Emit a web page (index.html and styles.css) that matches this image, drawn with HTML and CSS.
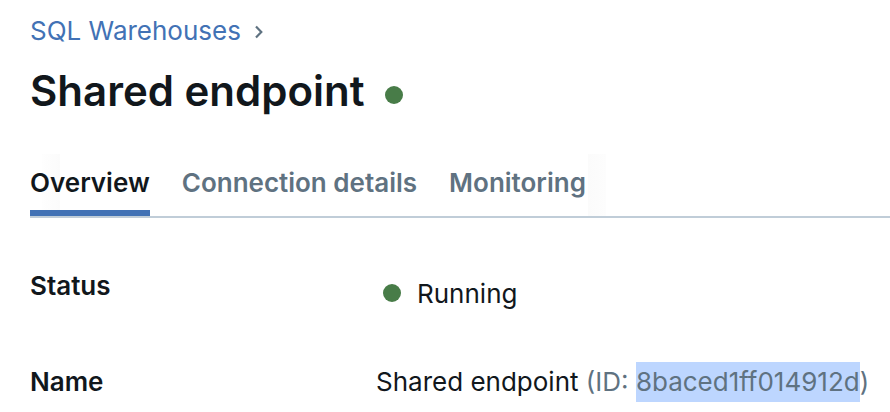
FILE: index.html
```html
<!DOCTYPE html>
<html lang="en">
<head>
<meta charset="utf-8">
<title>Shared endpoint</title>
<link rel="stylesheet" href="styles.css">
</head>
<body>
<main class="page">
  <nav class="breadcrumb" aria-label="Breadcrumb">
    <a href="#">SQL Warehouses</a>
    <svg class="chevron" viewBox="0 0 10 14" aria-hidden="true"><path d="M2 1.5l5.3 5.5-5.3 5.5"/></svg>
  </nav>
  <header class="heading">
    <h1>Shared endpoint</h1>
    <span class="dot"></span>
  </header>
  <div class="tabs" role="tablist">
    <button class="tab active" type="button" role="tab" aria-selected="true">Overview</button>
    <button class="tab" type="button" role="tab" aria-selected="false">Connection details</button>
    <button class="tab" type="button" role="tab" aria-selected="false">Monitoring</button>
    <span class="fade"></span>
  </div>
  <dl class="details">
    <dt>Status</dt>
    <dd class="status"><span class="dot"></span>Running</dd>
    <dt>Name</dt>
    <dd>Shared endpoint <span class="muted">(ID: <mark>8baced1ff014912d</mark>)</span></dd>
  </dl>
</main>
</body>
</html>
```
FILE: styles.css
```css
* {
  box-sizing: border-box;
}

body {
  margin: 0;
  background: #fff;
  color: #11171c;
  font: 26px/40px Inter, "Liberation Sans", sans-serif;
}

.page {
  padding: 11px 0 0 30px;
}

.breadcrumb {
  display: flex;
  align-items: center;
  gap: 13px;
}

.breadcrumb a {
  color: #4272b5;
  text-decoration: none;
}

.chevron {
  width: 10px;
  height: 14px;
  margin-top: 2px;
  fill: none;
  stroke: #5f7281;
  stroke-width: 2.2;
}

.heading {
  display: flex;
  align-items: center;
  gap: 20px;
  margin-top: 12px;
}

h1 {
  margin: 0;
  font-size: 42px;
  font-weight: 600;
  line-height: 56px;
}

.dot {
  flex: none;
  width: 18px;
  height: 18px;
  border-radius: 50%;
  background: #487c48;
}

.heading .dot {
  margin-top: 8px;
}

.tabs {
  display: flex;
  gap: 32px;
  margin-top: 35px;
  border-bottom: 2px solid #c0cdd8;
}

.tab {
  padding: 9px 0 7px;
  border: 0;
  border-bottom: 6px solid transparent;
  background: none;
  color: #5f7281;
  font: inherit;
  font-weight: 600;
}

.tab.active {
  border-color: #4272b5;
  background: linear-gradient(90deg, #fefefe, #fbfbfb) 12px 0 / 18px 100% no-repeat;
  color: #11171c;
}

.fade {
  width: 18px;
  margin-left: -30px;
  background: linear-gradient(90deg, #fbfbfb, #fdfdfd);
}

.details {
  display: grid;
  grid-template-columns: 346px 1fr;
  row-gap: 48px;
  margin: 48px 0 0;
}

dt {
  font-weight: 600;
}

dd {
  margin: 0;
  white-space: nowrap;
}

.status {
  display: flex;
  align-items: center;
  gap: 16px;
  padding: 8px 0 0 7px;
}

.status .dot {
  margin-bottom: 2px;
}

.muted {
  color: #5f7281;
}

mark {
  display: inline-block;
  background: #bdd6ff;
  color: inherit;
}
```
